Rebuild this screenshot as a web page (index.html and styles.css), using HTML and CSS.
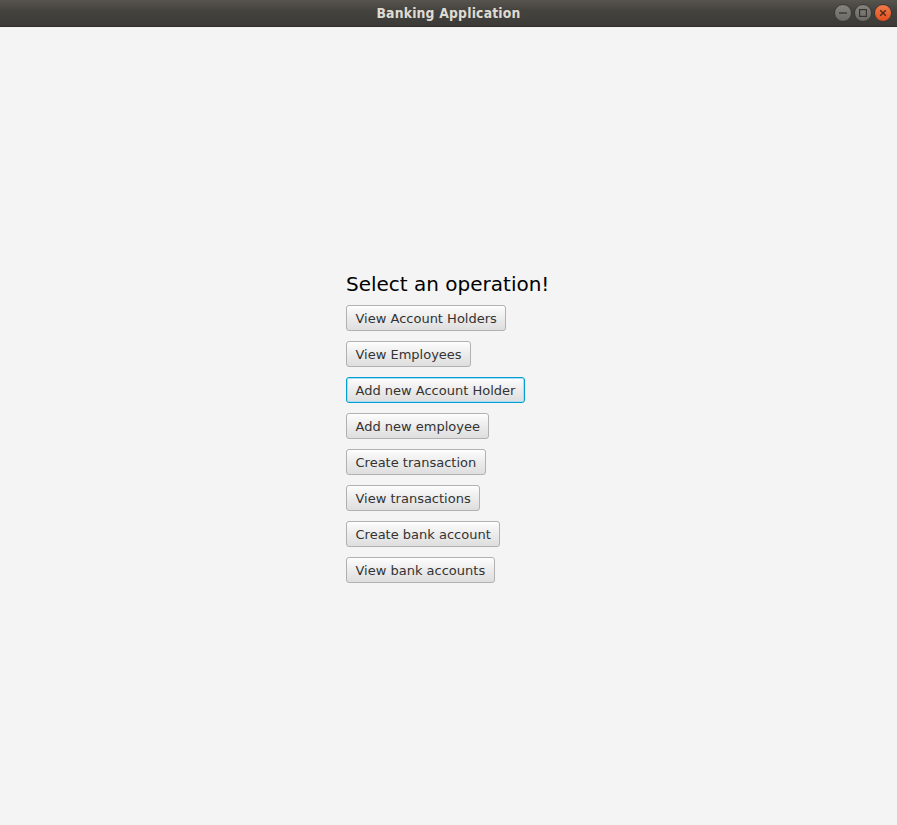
FILE: index.html
```html
<!DOCTYPE html>
<html>
<head>
<meta charset="utf-8">
<link rel="stylesheet" href="styles.css">
</head>
<body>
<div class="window">
  <header class="titlebar">
    <span class="title">Banking Application</span>
    <div class="controls">
      <span class="ctl ctl-min"><svg width="16" height="16" viewBox="0 0 16 16"><line x1="4" y1="8" x2="12" y2="8" stroke="#36352f" stroke-width="1.3"/></svg></span>
      <span class="ctl ctl-max"><svg width="16" height="16" viewBox="0 0 16 16"><rect x="4.6" y="4.6" width="6.8" height="6.8" fill="none" stroke="#36352f" stroke-width="1.2"/></svg></span>
      <span class="ctl ctl-close"><svg width="16" height="16" viewBox="0 0 16 16"><path d="M5.2 5.2 L10.8 10.8 M10.8 5.2 L5.2 10.8" stroke="#4a2a1a" stroke-width="1.4"/></svg></span>
    </div>
  </header>
  <main class="content">
    <div class="menu">
      <h1 class="heading">Select an operation!</h1>
      <button class="btn">View Account Holders</button>
      <button class="btn">View Employees</button>
      <button class="btn btn-focused">Add new Account Holder</button>
      <button class="btn">Add new employee</button>
      <button class="btn">Create transaction</button>
      <button class="btn">View transactions</button>
      <button class="btn">Create bank account</button>
      <button class="btn">View bank accounts</button>
    </div>
  </main>
</div>
</body>
</html>
```
FILE: styles.css
```css
html, body {
  margin: 0;
  padding: 0;
  height: 100%;
}
body {
  background: #f4f4f4;
  font-family: "DejaVu Sans", sans-serif;
}
.window {
  display: flex;
  flex-direction: column;
  height: 825px;
}
.titlebar {
  height: 27px;
  flex: none;
  position: relative;
  display: flex;
  align-items: center;
  justify-content: center;
  background: linear-gradient(#57544e, #45433e 40%, #3c3b37);
  border-bottom: 1px solid #2f2e2b;
  box-sizing: border-box;
}
.title {
  color: #dfdbd2;
  font-family: "DejaVu Sans Condensed", "DejaVu Sans", sans-serif;
  font-weight: bold;
  font-size: 13.8px;
  letter-spacing: 0.2px;
}
.controls {
  position: absolute;
  right: 5px;
  top: 4px;
  display: flex;
  gap: 2px;
}
.ctl {
  width: 18px;
  height: 18px;
  border-radius: 50%;
  display: flex;
  align-items: center;
  justify-content: center;
  box-sizing: border-box;
}
.ctl-min, .ctl-max {
  background: linear-gradient(#85837e, #6c6a65);
  border: 1px solid #3a3935;
}
.ctl-close {
  background: linear-gradient(#f27a4c, #e2501f);
  border: 1px solid #3a3935;
}
.content {
  flex: 1;
  display: flex;
  align-items: center;
  justify-content: center;
  padding-top: 2px;
}
.menu {
  width: 205px;
  display: flex;
  flex-direction: column;
  align-items: flex-start;
  gap: 10px;
}
.heading {
  margin: 0 0 -1px 0;
  padding-top: 1px;
  font-weight: normal;
  font-size: 20px;
  line-height: 24px;
  color: #000;
  white-space: nowrap;
}
.btn {
  font-family: "DejaVu Sans", sans-serif;
  font-size: 13px;
  line-height: 16px;
  color: #333;
  padding: 5px 8.5px 3px;
  height: 26px;
  border: 1px solid #b1b1b1;
  border-radius: 3px;
  background: linear-gradient(#fdfdfd, #ececec 50%, #dedede);
  box-shadow: inset 0 1px 0 #ffffff;
  box-sizing: border-box;
  cursor: default;
}
.btn-focused {
  border-color: #039ed3;
  box-shadow: inset 0 0 0 1px #a9def2, inset 0 2px 0 #fff;
}
```
